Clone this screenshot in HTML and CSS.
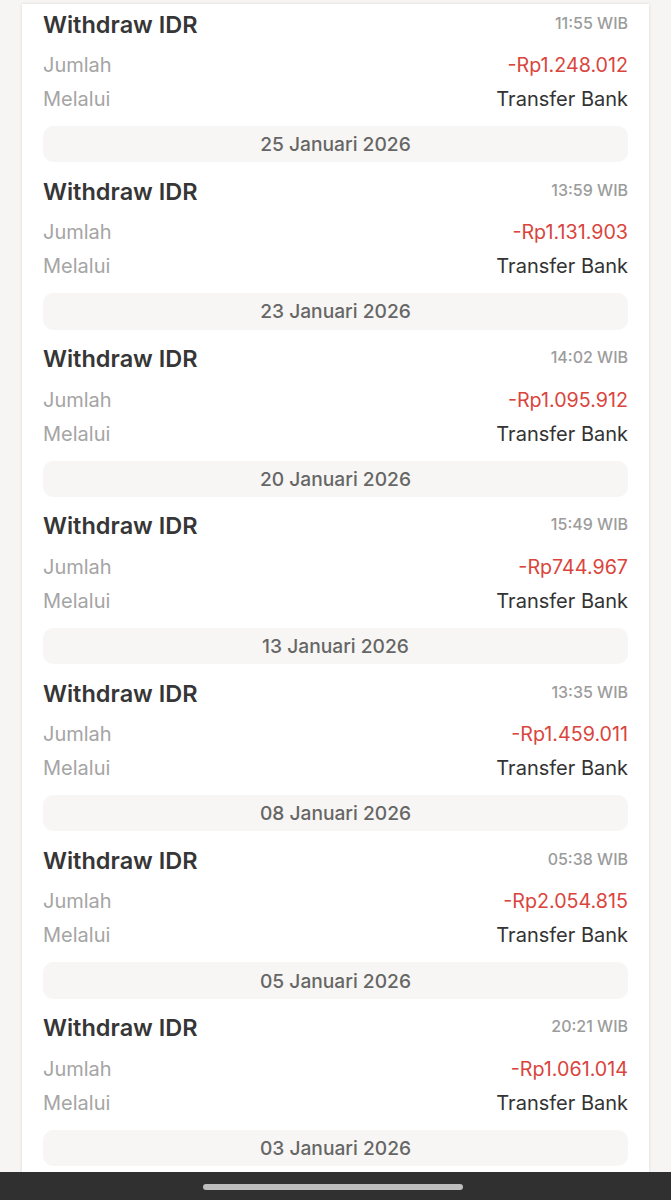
FILE: index.html
```html
<!DOCTYPE html>
<html lang="id">
<head>
    <meta charset="UTF-8">
    <meta name="viewport" content="width=device-width, initial-scale=1.0">
    <title>Riwayat Transaksi</title>
    <link rel="stylesheet" href="styles.css">
</head>
<body>
    <div class="card">
        <div class="item">
            <div class="item-head">
                <span class="item-title">Withdraw IDR</span>
                <span class="item-time">11:55 WIB</span>
            </div>
            <div class="row"><span class="label">Jumlah</span><span class="amount">-Rp1.248.012</span></div>
            <div class="row"><span class="label">Melalui</span><span class="value">Transfer Bank</span></div>
        </div>
        <div class="date">25 Januari 2026</div>

        <div class="item">
            <div class="item-head">
                <span class="item-title">Withdraw IDR</span>
                <span class="item-time">13:59 WIB</span>
            </div>
            <div class="row"><span class="label">Jumlah</span><span class="amount">-Rp1.131.903</span></div>
            <div class="row"><span class="label">Melalui</span><span class="value">Transfer Bank</span></div>
        </div>
        <div class="date">23 Januari 2026</div>

        <div class="item">
            <div class="item-head">
                <span class="item-title">Withdraw IDR</span>
                <span class="item-time">14:02 WIB</span>
            </div>
            <div class="row"><span class="label">Jumlah</span><span class="amount">-Rp1.095.912</span></div>
            <div class="row"><span class="label">Melalui</span><span class="value">Transfer Bank</span></div>
        </div>
        <div class="date">20 Januari 2026</div>

        <div class="item">
            <div class="item-head">
                <span class="item-title">Withdraw IDR</span>
                <span class="item-time">15:49 WIB</span>
            </div>
            <div class="row"><span class="label">Jumlah</span><span class="amount">-Rp744.967</span></div>
            <div class="row"><span class="label">Melalui</span><span class="value">Transfer Bank</span></div>
        </div>
        <div class="date">13 Januari 2026</div>

        <div class="item">
            <div class="item-head">
                <span class="item-title">Withdraw IDR</span>
                <span class="item-time">13:35 WIB</span>
            </div>
            <div class="row"><span class="label">Jumlah</span><span class="amount">-Rp1.459.011</span></div>
            <div class="row"><span class="label">Melalui</span><span class="value">Transfer Bank</span></div>
        </div>
        <div class="date">08 Januari 2026</div>

        <div class="item">
            <div class="item-head">
                <span class="item-title">Withdraw IDR</span>
                <span class="item-time">05:38 WIB</span>
            </div>
            <div class="row"><span class="label">Jumlah</span><span class="amount">-Rp2.054.815</span></div>
            <div class="row"><span class="label">Melalui</span><span class="value">Transfer Bank</span></div>
        </div>
        <div class="date">05 Januari 2026</div>

        <div class="item">
            <div class="item-head">
                <span class="item-title">Withdraw IDR</span>
                <span class="item-time">20:21 WIB</span>
            </div>
            <div class="row"><span class="label">Jumlah</span><span class="amount">-Rp1.061.014</span></div>
            <div class="row"><span class="label">Melalui</span><span class="value">Transfer Bank</span></div>
        </div>
        <div class="date">03 Januari 2026</div>
    </div>

    <div class="navbar">
        <div class="nav-handle"></div>
    </div>
</body>
</html>
```

FILE: styles.css
```css
body {
    font-family: Inter, "Noto Sans", sans-serif;
    background-color: #f6f5f3;
    margin: 0;
    padding: 4px 0 0;
    height: 1196px;
    overflow: hidden;
}
.card {
    background: white;
    margin: 0 22px;
    padding: 3px 21px 40px;
    box-shadow: 0px 0px 3px rgba(0, 0, 0, 0.12);
}
.item-head {
    display: flex;
    justify-content: space-between;
    align-items: center;
    height: 34px;
    margin-bottom: 7px;
}
.item-title {
    font-size: 23.5px;
    font-weight: 600;
    color: #363636;
}
.item-time {
    font-size: 16px;
    font-weight: 500;
    color: #9c9c9c;
    margin-top: -3px;
}
.row {
    display: flex;
    justify-content: space-between;
    align-items: center;
    height: 34px;
    font-size: 20px;
}
.label {
    color: #a5a5a5;
}
.amount {
    color: #d9453d;
    font-size: 19.7px;
}
.value {
    color: #333333;
}
.date {
    margin: 10px 0 12px;
    height: 36.3px;
    border-radius: 10px;
    background: #f7f6f4;
    color: #666666;
    font-size: 19.2px;
    font-weight: 500;
    display: flex;
    align-items: center;
    justify-content: center;
}
.navbar {
    position: fixed;
    left: 0;
    right: 0;
    bottom: 0;
    height: 28px;
    background: #303030;
    display: flex;
    justify-content: center;
}
.nav-handle {
    width: 260px;
    height: 6px;
    margin: 12px 6px 0 0;
    border-radius: 3px;
    background: #bdbdbd;
}
```
